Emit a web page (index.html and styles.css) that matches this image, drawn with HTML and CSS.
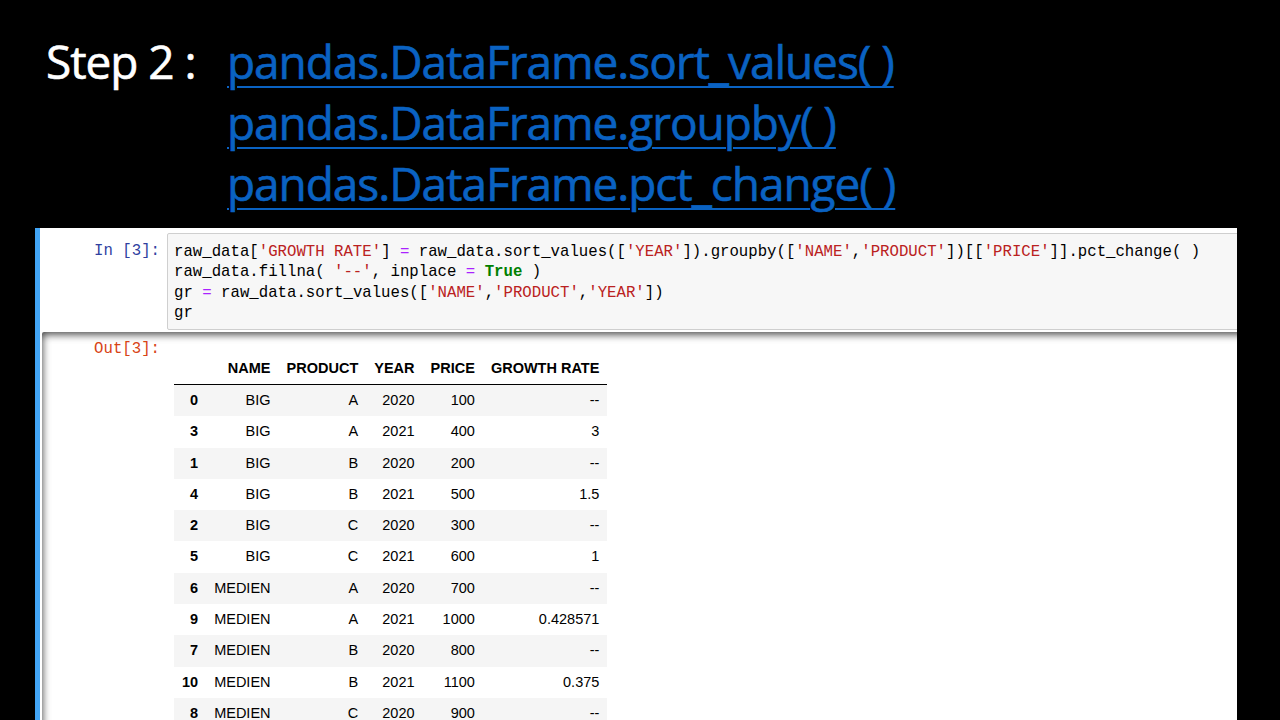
FILE: index.html
```html
<!DOCTYPE html>
<html>
<head>
<meta charset="utf-8">
<link rel="stylesheet" href="styles.css">
</head>
<body>
<div class="slide">
  <header class="heading">
    <div class="step">Step 2 :</div>
    <div class="links">
      <a class="link" href="#">pandas.DataFrame.sort_values( )</a>
      <a class="link" href="#">pandas.DataFrame.groupby( )</a>
      <a class="link" href="#">pandas.DataFrame.pct_change( )</a>
    </div>
  </header>
  <section class="notebook">
    <div class="cell-in">
      <div class="prompt in">In&nbsp;[3]:</div>
      <div class="code"><div>raw_data[<span class="s">'GROWTH RATE'</span>] <span class="o">=</span> raw_data.sort_values([<span class="s">'YEAR'</span>]).groupby([<span class="s">'NAME'</span>,<span class="s">'PRODUCT'</span>])[[<span class="s">'PRICE'</span>]].pct_change( )</div><div>raw_data.fillna( <span class="s">'--'</span>, inplace <span class="o">=</span> <span class="k">True</span> )</div><div>gr <span class="o">=</span> raw_data.sort_values([<span class="s">'NAME'</span>,<span class="s">'PRODUCT'</span>,<span class="s">'YEAR'</span>])</div><div>gr</div></div>
    </div>
    <div class="cell-out">
      <div class="prompt out">Out[3]:</div>
      <div class="result">
        <table class="df">
          <thead>
            <tr><th></th><th>NAME</th><th>PRODUCT</th><th>YEAR</th><th>PRICE</th><th>GROWTH RATE</th></tr>
          </thead>
          <tbody>
            <tr><th>0</th><td>BIG</td><td>A</td><td>2020</td><td>100</td><td>--</td></tr>
            <tr><th>3</th><td>BIG</td><td>A</td><td>2021</td><td>400</td><td>3</td></tr>
            <tr><th>1</th><td>BIG</td><td>B</td><td>2020</td><td>200</td><td>--</td></tr>
            <tr><th>4</th><td>BIG</td><td>B</td><td>2021</td><td>500</td><td>1.5</td></tr>
            <tr><th>2</th><td>BIG</td><td>C</td><td>2020</td><td>300</td><td>--</td></tr>
            <tr><th>5</th><td>BIG</td><td>C</td><td>2021</td><td>600</td><td>1</td></tr>
            <tr><th>6</th><td>MEDIEN</td><td>A</td><td>2020</td><td>700</td><td>--</td></tr>
            <tr><th>9</th><td>MEDIEN</td><td>A</td><td>2021</td><td>1000</td><td>0.428571</td></tr>
            <tr><th>7</th><td>MEDIEN</td><td>B</td><td>2020</td><td>800</td><td>--</td></tr>
            <tr><th>10</th><td>MEDIEN</td><td>B</td><td>2021</td><td>1100</td><td>0.375</td></tr>
            <tr><th>8</th><td>MEDIEN</td><td>C</td><td>2020</td><td>900</td><td>--</td></tr>
          </tbody>
        </table>
      </div>
    </div>
  </section>
</div>
</body>
</html>
```
FILE: styles.css
```css
html, body {
  margin: 0;
  padding: 0;
  background: #000;
  width: 1280px;
  height: 720px;
  overflow: hidden;
}

.slide {
  width: 1280px;
  height: 720px;
  display: flex;
  flex-direction: column;
  overflow: hidden;
}

.heading {
  display: flex;
  padding: 31px 0 0 46px;
  font-family: "Open Sans", "Noto Sans", sans-serif;
  font-size: 46px;
  line-height: 61px;
  letter-spacing: -1.05px;
  -webkit-text-stroke: 0.6px currentColor;
}

.step {
  color: #fff;
  width: 181px;
  flex: none;
}

.links {
  display: flex;
  flex-direction: column;
  align-items: flex-start;
}

.link {
  color: #0A62C2;
  text-decoration: underline;
  text-decoration-thickness: 2px;
  text-underline-offset: 7px;
}

.notebook {
  margin: 14px 0 0 35px;
  width: 1197px;
  flex: 1;
  background: #fff;
  border-left: 5px solid #42A5F5;
  overflow: hidden;
}

.prompt {
  flex: none;
  font-family: "Liberation Mono", monospace;
  font-size: 15.7px;
  line-height: 20.4px;
  text-align: right;
  box-sizing: border-box;
}

.cell-in {
  display: flex;
  padding-top: 5px;
}

.prompt.in {
  width: 127px;
  padding: 8px 7px 0 0;
  color: #303F9F;
}

.code {
  flex: none;
  width: 1200px;
  background: #f7f7f7;
  border: 1px solid #cfcfcf;
  border-radius: 2px;
  padding: 8px 6px 5px;
  font-family: "Liberation Mono", monospace;
  font-size: 15.7px;
  line-height: 20.4px;
  color: #000;
  white-space: pre;
}

.code .s { color: #BA2121; }
.code .o { color: #AA22FF; }
.code .k { color: #008000; font-weight: bold; }

.cell-out {
  display: flex;
  margin: 2px 0 0 2px;
  width: 1400px;
  min-height: 400px;
  border-radius: 2px;
  box-shadow: inset 0 2px 8px rgba(0, 0, 0, 0.8);
}

.prompt.out {
  width: 125px;
  padding: 7px 7px 0 0;
  color: #D84315;
}

.result {
  padding: 21px 0 0 7px;
}

.df {
  border-collapse: collapse;
  border-spacing: 0;
  font-family: "Liberation Sans", Arial, sans-serif;
  font-size: 14.5px;
  line-height: 15.3px;
  color: #000;
}

.df th, .df td {
  padding: 8px 8px;
  text-align: right;
  vertical-align: middle;
  white-space: nowrap;
}

.df thead th {
  font-weight: bold;
  border-bottom: 1px solid #000;
  vertical-align: bottom;
}

.df tbody th {
  font-weight: bold;
}

.df tbody tr:nth-child(odd) {
  background: #f5f5f5;
}
```
